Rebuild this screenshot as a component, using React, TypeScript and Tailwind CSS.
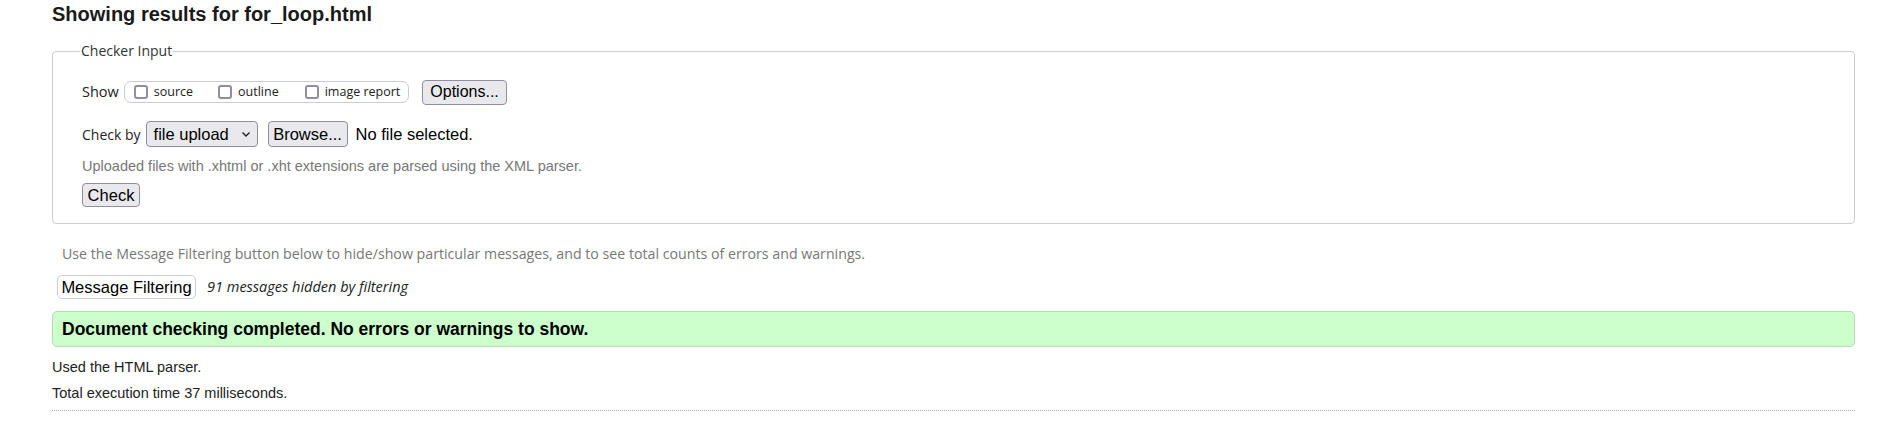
import React from "react";

const arial = "font-['Liberation_Sans',Arial,sans-serif]";
const segoe = "font-['Open_Sans','Noto_Sans',sans-serif]";

function Box({ label }: { label: string }) {
  return (
    <label className="flex items-center">
      <span className="block w-[14px] h-[14px] border-2 border-[#8f8f9d] rounded-[3px] bg-white" />
      <span className={`${segoe} text-[12.5px] leading-[18px] text-[#222] ml-[6px]`}>{label}</span>
    </label>
  );
}

export default function App() {
  return (
    <div className="bg-white w-[1901px] h-[427px] pl-[52px] pr-[46px] text-[#222]">
      <h2 className={`${arial} font-bold text-[20px] leading-[24px] pt-[2px] mb-[15px] text-[#1a1a1a]`}>
        Showing results for for_loop.html
      </h2>

      <fieldset className="border border-[#cccccc] rounded-[4px] pl-[29px] pr-[29px] pb-[16px] pt-[18px]">
        <legend className={`${segoe} text-[14px] leading-[20px] -ml-[2px] px-[1px] text-[#333]`}>Checker Input</legend>

        <div className="flex items-center h-[26px]">
          <span className={`${segoe} text-[14.5px] text-[#222]`}>Show</span>
          <div className="ml-[5px] h-[22px] border border-[#cccccc] rounded-[7px] flex items-center pl-[9px] pr-[8px]">
            <Box label="source" />
            <div className="w-[25px]" />
            <Box label="outline" />
            <div className="w-[26px]" />
            <Box label="image report" />
          </div>
          <button className={`${arial} ml-[13px] h-[25px] px-[7px] text-[16px] leading-[20px] text-black bg-[#e9e9ed] border border-[#8f8f9d] rounded-[4px]`}>
            Options...
          </button>
        </div>

        <div className="flex items-center h-[26px] mt-[16px]">
          <span className={`${segoe} text-[14px] text-[#222]`}>Check by</span>
          <div className={`${arial} ml-[5px] w-[112px] h-[26px] flex items-center justify-between pl-[7px] pr-[5px] text-[16.5px] text-black bg-[#e9e9ed] border border-[#8f8f9d] rounded-[4px]`}>
            <span>file upload</span>
            <svg width="10" height="8" viewBox="0 0 10 8" className="mr-[1px]">
              <path d="M1.5 2.5 L5 6 L8.5 2.5" fill="none" stroke="#222" strokeWidth="1.4" />
            </svg>
          </div>
          <button className={`${arial} ml-[10px] h-[26px] w-[80px] text-[16.5px] leading-[20px] text-black bg-[#e9e9ed] border border-[#8f8f9d] rounded-[4px]`}>
            Browse...
          </button>
          <span className={`${arial} ml-[8px] text-[16.5px] text-black`}>No file selected.</span>
        </div>

        <p className={`${arial} text-[14.5px] leading-[20px] text-[#777] mt-[9px]`}>
          Uploaded files with .xhtml or .xht extensions are parsed using the XML parser.
        </p>

        <button className={`${arial} mt-[7px] h-[24px] w-[58px] text-[16.5px] leading-[20px] text-black bg-[#e9e9ed] border border-[#8f8f9d] rounded-[4px] block`}>
          Check
        </button>
      </fieldset>

      <p className={`${segoe} text-[14.2px] leading-[20px] text-[#777] mt-[20px] pl-[10px]`}>
        Use the Message Filtering button below to hide/show particular messages, and to see total counts of errors and warnings.
      </p>

      <div className="flex items-center mt-[11px] pl-[5px]">
        <button className={`${arial} h-[24px] w-[139px] text-[16.5px] leading-[20px] text-black bg-white border border-[#cfcfcf] rounded-[5px]`}>
          Message Filtering
        </button>
        <span className={`${segoe} italic text-[14.5px] text-[#222] ml-[11px]`}>91 messages hidden by filtering</span>
      </div>

      <div className="mt-[12px] h-[36px] bg-[#ccffcc] border border-[#b5dcb5] rounded-[5px] flex items-center pl-[9px]">
        <span className={`${arial} font-bold text-[17.5px] text-black`}>
          Document checking completed. No errors or warnings to show.
        </span>
      </div>

      <p className={`${arial} text-[14.5px] leading-[20px] text-[#222] mt-[10px]`}>Used the HTML parser.</p>
      <p className={`${arial} text-[14.5px] leading-[20px] text-[#222] mt-[6px]`}>Total execution time 37 milliseconds.</p>

      <div className="mt-[7px] border-t border-dotted border-[#aaaaaa]" />
    </div>
  );
}
